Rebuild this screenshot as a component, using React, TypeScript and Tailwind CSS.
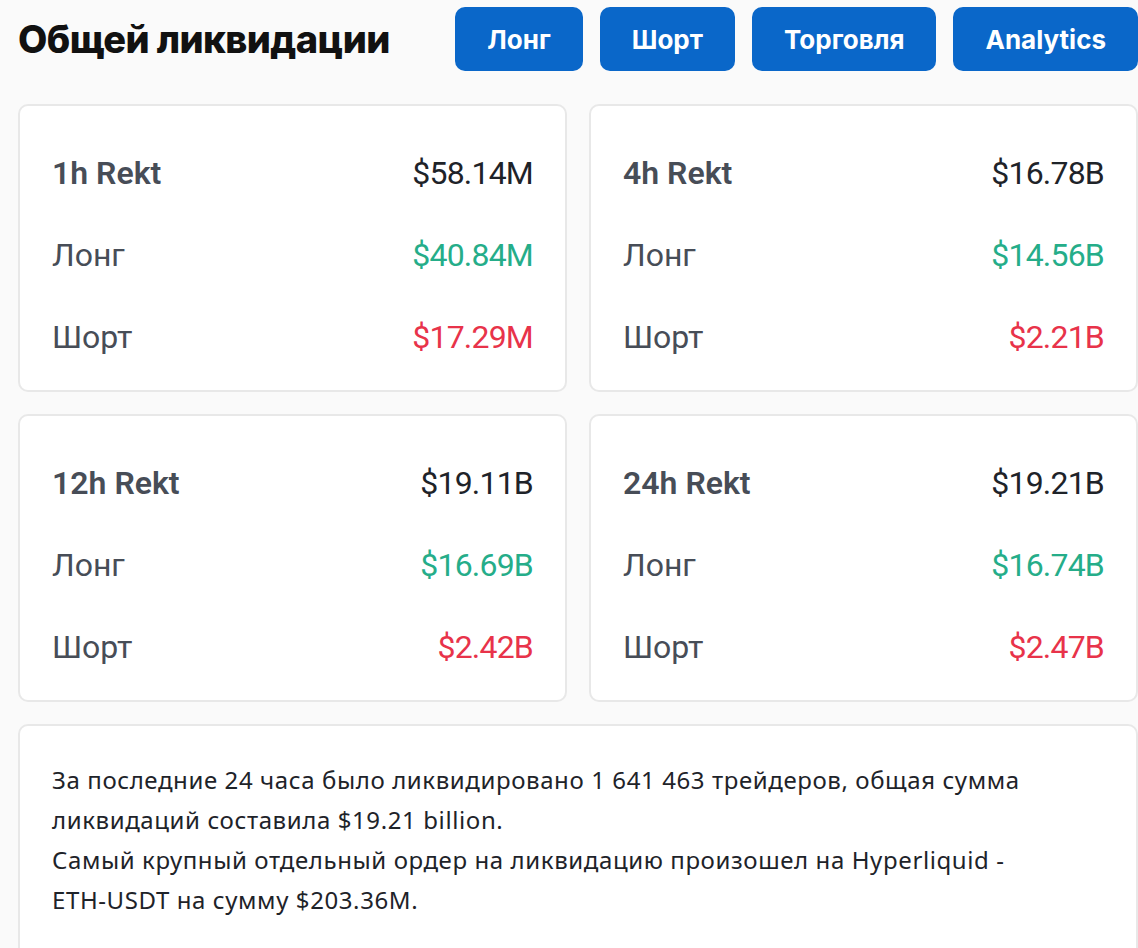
import React from 'react';

interface Stat {
  period: string;
  total: string;
  long: string;
  short: string;
}

const stats: Stat[] = [
  { period: '1h Rekt', total: '$58.14M', long: '$40.84M', short: '$17.29M' },
  { period: '4h Rekt', total: '$16.78B', long: '$14.56B', short: '$2.21B' },
  { period: '12h Rekt', total: '$19.11B', long: '$16.69B', short: '$2.42B' },
  { period: '24h Rekt', total: '$19.21B', long: '$16.74B', short: '$2.47B' },
];

const tabs = ['Лонг', 'Шорт', 'Торговля', 'Analytics'];

const StatCard: React.FC<{ stat: Stat }> = ({ stat }) => {
  return (
    <div className="h-[288px] bg-white border-2 border-[#e8e8e8] rounded-[10px] px-[32px] pt-[26px]">
      <div className="h-[82px] flex items-center justify-between">
        <p className="font-semibold text-[#474d57]">{stat.period}</p>
        <p className="text-[#1e2329] tracking-[-0.8px]">{stat.total}</p>
      </div>
      <div className="h-[82px] flex items-center justify-between">
        <p className="text-[#474d57]">Лонг</p>
        <p className="text-[#25ad89] tracking-[-0.8px]">{stat.long}</p>
      </div>
      <div className="h-[82px] flex items-center justify-between">
        <p className="text-[#474d57]">Шорт</p>
        <p className="text-[#e8334a] tracking-[-0.8px]">{stat.short}</p>
      </div>
    </div>
  );
};

export default function App() {
  return (
    <div className="w-[1138px] h-[948px] overflow-hidden bg-[#fafafa] pl-[18px] pt-[7px] font-['Roboto','Noto_Sans',sans-serif]">
      {/* header */}
      <div className="flex items-center justify-between h-[64px]">
        <h1 className="font-['Inter',sans-serif] text-[38px] font-extrabold tracking-[-0.6px] text-[#111111]">
          Общей ликвидации
        </h1>
        <div className="flex items-center gap-[17px]">
          {tabs.map((tab) => (
            <button
              key={tab}
              className="h-[64px] px-8 rounded-[10px] bg-[#0a67c9] text-white text-[26px] font-bold font-['Inter',sans-serif]"
            >
              {tab}
            </button>
          ))}
        </div>
      </div>

      {/* cards */}
      <div className="grid grid-cols-2 gap-x-[22px] gap-y-[22px] mt-[33px] text-[32px]">
        {stats.map((stat) => (
          <StatCard key={stat.period} stat={stat} />
        ))}
      </div>

      {/* summary */}
      <div className="mt-[22px] bg-white border-2 border-[#e8e8e8] rounded-[10px] px-[32px] pt-[34px] pb-[40px] font-['Noto_Sans',sans-serif] text-[24px] tracking-[0.6px] leading-[40px] text-[#1e2329]">
        <p>
          За последние 24 часа было ликвидировано 1 641 463 трейдеров, общая сумма ликвидаций составила $19.21 billion.
        </p>
        <p>
          Самый крупный отдельный ордер на ликвидацию произошел на Hyperliquid -{' '}
          <span className="whitespace-nowrap">ETH-USDT</span> на сумму $203.36M.
        </p>
      </div>
    </div>
  );
}
